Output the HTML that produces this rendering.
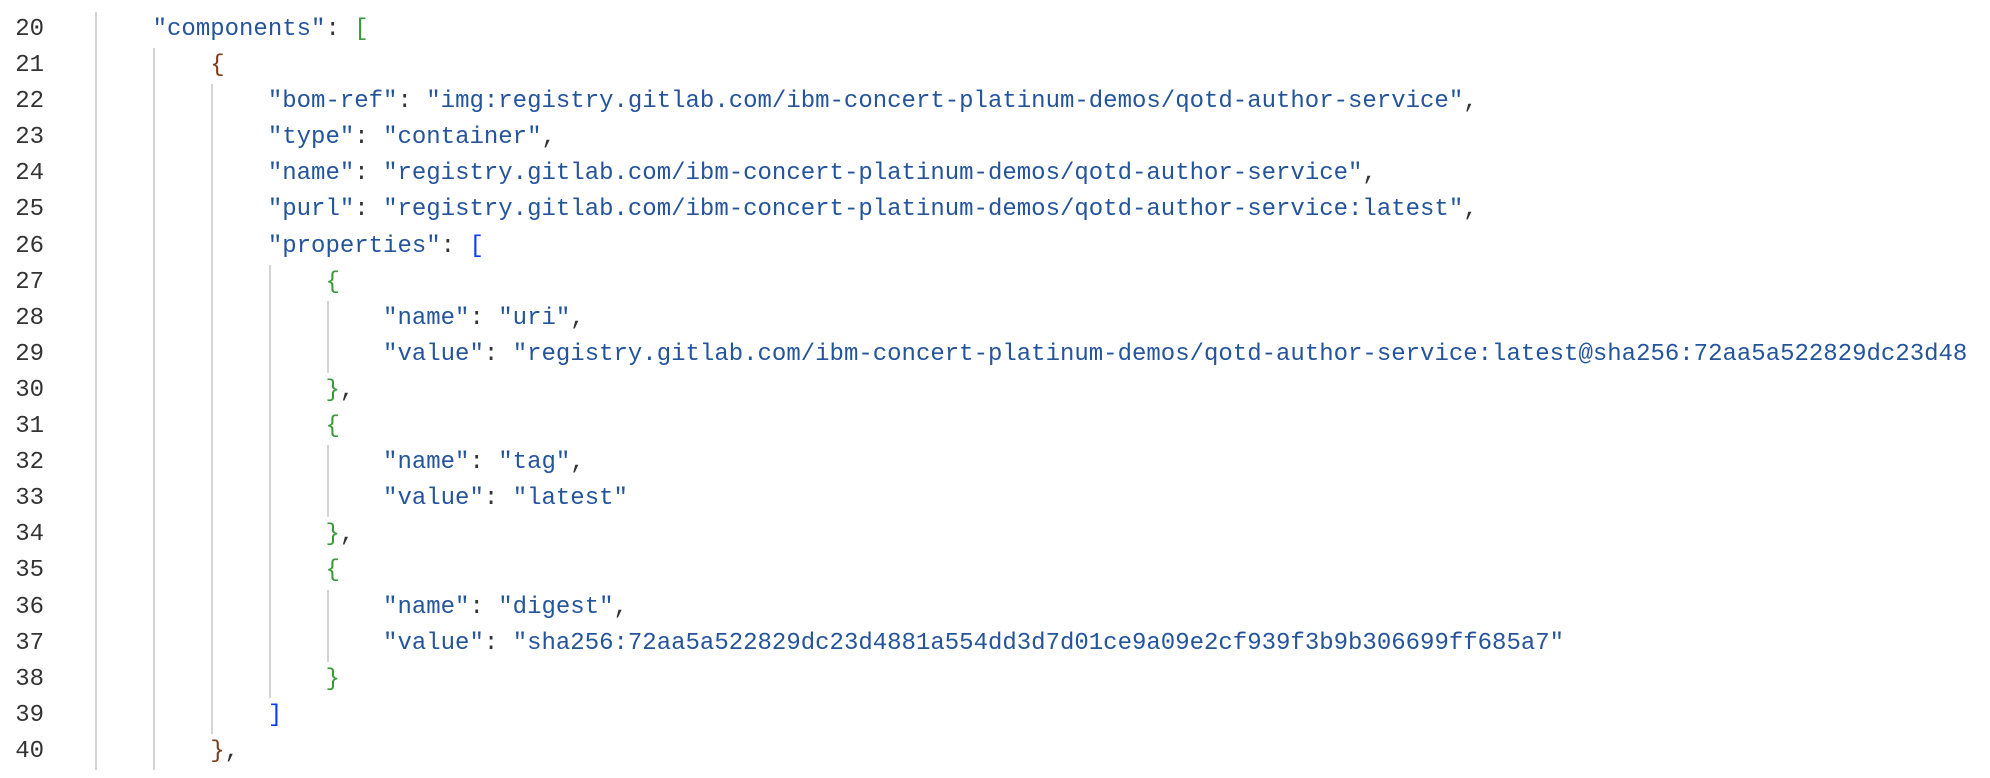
<!DOCTYPE html>
<html><head><meta charset="utf-8"><style>
html,body{margin:0;padding:0;background:#fff;width:1990px;height:778px;overflow:hidden}
.ed{position:absolute;left:0;top:12px;font-family:"Liberation Mono",monospace;font-size:24px}
.l{position:relative;height:36.1px;line-height:36.1px;white-space:pre}
.n{position:absolute;left:0;width:44px;text-align:right;color:#333}
.c{position:absolute;left:95px;color:#333}
.g{position:absolute;top:0;height:36.1px;width:2px;background:#d4d4d4}
.k{color:#24549c}
.b1{color:#3a9a3a}.b2{color:#7a3e1a}.b3{color:#0a3cff}
</style></head><body><div class="ed">
<div class="l"><span class="n">20</span><span class="g" style="left:95px"></span><span class="c">    <span class="k">"components"</span>: <span class="b1">[</span></span></div>
<div class="l"><span class="n">21</span><span class="g" style="left:95px"></span><span class="g" style="left:153px"></span><span class="c">        <span class="b2">{</span></span></div>
<div class="l"><span class="n">22</span><span class="g" style="left:95px"></span><span class="g" style="left:153px"></span><span class="g" style="left:211px"></span><span class="c">            <span class="k">"bom-ref"</span>: <span class="k">"img:registry.gitlab.com/ibm-concert-platinum-demos/qotd-author-service"</span>,</span></div>
<div class="l"><span class="n">23</span><span class="g" style="left:95px"></span><span class="g" style="left:153px"></span><span class="g" style="left:211px"></span><span class="c">            <span class="k">"type"</span>: <span class="k">"container"</span>,</span></div>
<div class="l"><span class="n">24</span><span class="g" style="left:95px"></span><span class="g" style="left:153px"></span><span class="g" style="left:211px"></span><span class="c">            <span class="k">"name"</span>: <span class="k">"registry.gitlab.com/ibm-concert-platinum-demos/qotd-author-service"</span>,</span></div>
<div class="l"><span class="n">25</span><span class="g" style="left:95px"></span><span class="g" style="left:153px"></span><span class="g" style="left:211px"></span><span class="c">            <span class="k">"purl"</span>: <span class="k">"registry.gitlab.com/ibm-concert-platinum-demos/qotd-author-service:latest"</span>,</span></div>
<div class="l"><span class="n">26</span><span class="g" style="left:95px"></span><span class="g" style="left:153px"></span><span class="g" style="left:211px"></span><span class="c">            <span class="k">"properties"</span>: <span class="b3">[</span></span></div>
<div class="l"><span class="n">27</span><span class="g" style="left:95px"></span><span class="g" style="left:153px"></span><span class="g" style="left:211px"></span><span class="g" style="left:269px"></span><span class="c">                <span class="b1">{</span></span></div>
<div class="l"><span class="n">28</span><span class="g" style="left:95px"></span><span class="g" style="left:153px"></span><span class="g" style="left:211px"></span><span class="g" style="left:269px"></span><span class="g" style="left:327px"></span><span class="c">                    <span class="k">"name"</span>: <span class="k">"uri"</span>,</span></div>
<div class="l"><span class="n">29</span><span class="g" style="left:95px"></span><span class="g" style="left:153px"></span><span class="g" style="left:211px"></span><span class="g" style="left:269px"></span><span class="g" style="left:327px"></span><span class="c">                    <span class="k">"value"</span>: <span class="k">"registry.gitlab.com/ibm-concert-platinum-demos/qotd-author-service:latest@sha256:72aa5a522829dc23d48</span></span></div>
<div class="l"><span class="n">30</span><span class="g" style="left:95px"></span><span class="g" style="left:153px"></span><span class="g" style="left:211px"></span><span class="g" style="left:269px"></span><span class="c">                <span class="b1">}</span>,</span></div>
<div class="l"><span class="n">31</span><span class="g" style="left:95px"></span><span class="g" style="left:153px"></span><span class="g" style="left:211px"></span><span class="g" style="left:269px"></span><span class="c">                <span class="b1">{</span></span></div>
<div class="l"><span class="n">32</span><span class="g" style="left:95px"></span><span class="g" style="left:153px"></span><span class="g" style="left:211px"></span><span class="g" style="left:269px"></span><span class="g" style="left:327px"></span><span class="c">                    <span class="k">"name"</span>: <span class="k">"tag"</span>,</span></div>
<div class="l"><span class="n">33</span><span class="g" style="left:95px"></span><span class="g" style="left:153px"></span><span class="g" style="left:211px"></span><span class="g" style="left:269px"></span><span class="g" style="left:327px"></span><span class="c">                    <span class="k">"value"</span>: <span class="k">"latest"</span></span></div>
<div class="l"><span class="n">34</span><span class="g" style="left:95px"></span><span class="g" style="left:153px"></span><span class="g" style="left:211px"></span><span class="g" style="left:269px"></span><span class="c">                <span class="b1">}</span>,</span></div>
<div class="l"><span class="n">35</span><span class="g" style="left:95px"></span><span class="g" style="left:153px"></span><span class="g" style="left:211px"></span><span class="g" style="left:269px"></span><span class="c">                <span class="b1">{</span></span></div>
<div class="l"><span class="n">36</span><span class="g" style="left:95px"></span><span class="g" style="left:153px"></span><span class="g" style="left:211px"></span><span class="g" style="left:269px"></span><span class="g" style="left:327px"></span><span class="c">                    <span class="k">"name"</span>: <span class="k">"digest"</span>,</span></div>
<div class="l"><span class="n">37</span><span class="g" style="left:95px"></span><span class="g" style="left:153px"></span><span class="g" style="left:211px"></span><span class="g" style="left:269px"></span><span class="g" style="left:327px"></span><span class="c">                    <span class="k">"value"</span>: <span class="k">"sha256:72aa5a522829dc23d4881a554dd3d7d01ce9a09e2cf939f3b9b306699ff685a7"</span></span></div>
<div class="l"><span class="n">38</span><span class="g" style="left:95px"></span><span class="g" style="left:153px"></span><span class="g" style="left:211px"></span><span class="g" style="left:269px"></span><span class="c">                <span class="b1">}</span></span></div>
<div class="l"><span class="n">39</span><span class="g" style="left:95px"></span><span class="g" style="left:153px"></span><span class="g" style="left:211px"></span><span class="c">            <span class="b3">]</span></span></div>
<div class="l"><span class="n">40</span><span class="g" style="left:95px"></span><span class="g" style="left:153px"></span><span class="c">        <span class="b2">}</span>,</span></div>
</div></body></html>
